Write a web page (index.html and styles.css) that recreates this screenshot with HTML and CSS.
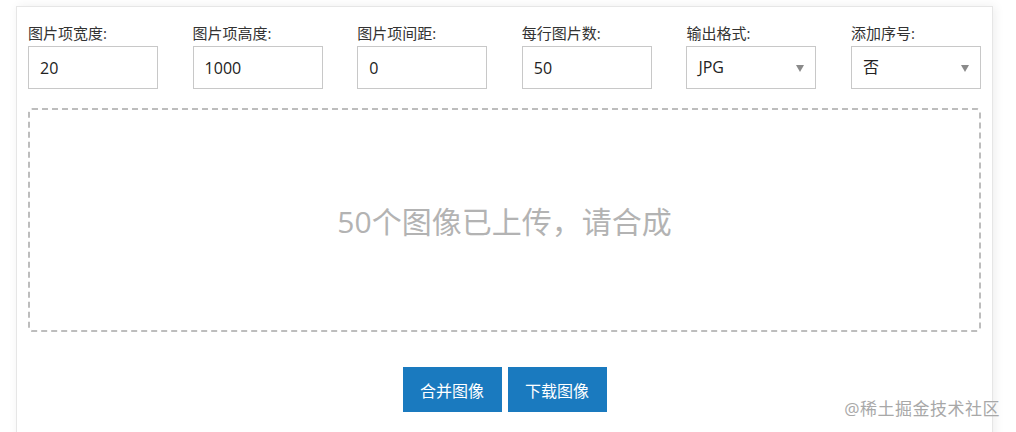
FILE: index.html
```html
<!DOCTYPE html>
<html lang="zh-CN">
  <head>
    <meta charset="UTF-8" />
    <meta name="viewport" content="width=device-width, initial-scale=1.0" />
    <title>图片合成</title>
    <link rel="stylesheet" href="styles.css">
  </head>
  <body>
    <div class="panel">
      <div class="options">
        <div class="field">
          <label>图片项宽度:</label>
          <input type="text" value="20" />
        </div>
        <div class="field">
          <label>图片项高度:</label>
          <input type="text" value="1000" />
        </div>
        <div class="field">
          <label>图片项间距:</label>
          <input type="text" value="0" />
        </div>
        <div class="field">
          <label>每行图片数:</label>
          <input type="text" value="50" />
        </div>
        <div class="field">
          <label>输出格式:</label>
          <div class="select">JPG</div>
        </div>
        <div class="field">
          <label>添加序号:</label>
          <div class="select">否</div>
        </div>
      </div>

      <div class="dropzone">50个图像已上传，请合成</div>

      <div class="actions">
        <button>合并图像</button>
        <button>下载图像</button>
      </div>
    </div>

    <div class="watermark">@稀土掘金技术社区</div>
  </body>
</html>
```

FILE: styles.css
```css
html,
body {
  height: 432px;
  overflow: hidden;
}

body {
  font-family: "Open Sans", "Noto Sans CJK SC", sans-serif;
  background-color: #fff;
  margin: 0;
  padding: 0;
  position: relative;
}

.panel {
  width: 953px;
  height: 420px;
  margin: 6px 0 0 16px;
  padding: 16px 11px;
  background-color: #fff;
  border: 1px solid #e6e6e6;
  box-shadow: 2px 0 10px rgba(0, 0, 0, 0.07);
}

.options {
  display: flex;
  justify-content: space-between;
}

.field label {
  display: block;
  font-size: 15px;
  line-height: 20px;
  color: #333;
  margin-bottom: 3px;
}

.field input,
.select {
  box-sizing: border-box;
  width: 130px;
  height: 43px;
  padding: 0 11px;
  font-family: "Open Sans", "Noto Sans CJK SC", sans-serif;
  font-size: 16px;
  color: #222;
  border: 1px solid #c8c8c8;
  border-radius: 0;
  outline: none;
}

.select {
  position: relative;
  line-height: 41px;
}

/* small grey triangle */
.select::after {
  content: "";
  position: absolute;
  right: 11px;
  top: 18px;
  border-left: 4px solid transparent;
  border-right: 4px solid transparent;
  border-top: 7px solid #8a8a8a;
}

.dropzone {
  margin-top: 19px;
  height: 220px;
  border: 2px dashed #bdbdbd;
  border-radius: 4px;
  display: flex;
  align-items: center;
  justify-content: center;
  font-size: 30px;
  color: #b3b3b3;
}

.actions {
  margin-top: 35px;
  display: flex;
  justify-content: center;
  gap: 6px;
}

.actions button {
  width: 99px;
  height: 45px;
  border: none;
  background-color: #1a7abf;
  color: #fff;
  font-family: "Open Sans", "Noto Sans CJK SC", sans-serif;
  font-size: 16px;
  cursor: pointer;
}

.watermark {
  position: absolute;
  right: 16px;
  top: 395px;
  font-size: 17px;
  color: #a8a8a8;
  letter-spacing: 0.5px;
}
```
